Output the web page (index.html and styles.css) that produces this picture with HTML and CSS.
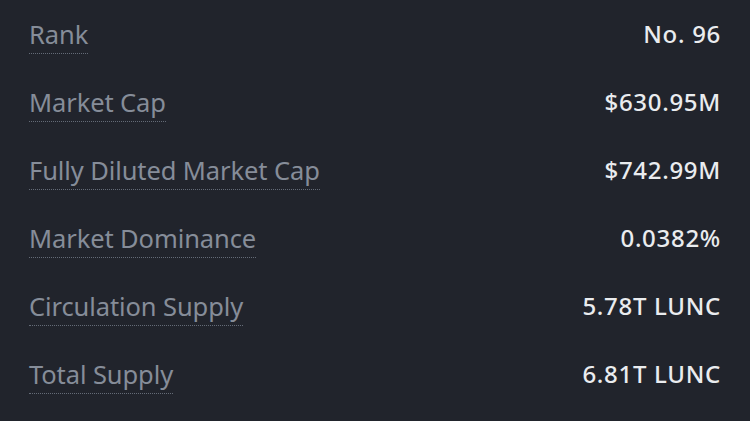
FILE: index.html
```html
<!DOCTYPE html>
<html>
<head>
<meta charset="utf-8">
<link rel="stylesheet" href="styles.css">
</head>
<body>
<div class="stats">
  <div class="row"><span class="label">Rank</span><span class="value">No. 96</span></div>
  <div class="row"><span class="label">Market Cap</span><span class="value">$630.95M</span></div>
  <div class="row"><span class="label">Fully Diluted Market Cap</span><span class="value">$742.99M</span></div>
  <div class="row"><span class="label">Market Dominance</span><span class="value">0.0382%</span></div>
  <div class="row"><span class="label">Circulation Supply</span><span class="value">5.78T LUNC</span></div>
  <div class="row"><span class="label">Total Supply</span><span class="value">6.81T LUNC</span></div>
</div>
</body>
</html>
```
FILE: styles.css
```css
html, body {
  margin: 0;
  padding: 0;
  background: #21242c;
  width: 750px;
  height: 421px;
  overflow: hidden;
}
.stats {
  display: flex;
  flex-direction: column;
  padding: 0 30px 0 29px;
}
.row {
  height: 68px;
  display: flex;
  justify-content: space-between;
  align-items: center;
}
.label {
  font-family: "Noto Sans", sans-serif;
  font-size: 25.5px;
  line-height: 30px;
  color: #868d99;
  border-bottom: 1px dotted #646b77;
  padding: 4px 0;
  letter-spacing: -0.1px;
}
.value {
  font-family: "Noto Sans", sans-serif;
  font-size: 24px;
  font-weight: 500;
  letter-spacing: 0.7px;
  color: #eaecef;
  line-height: 30px;
  margin-right: -1px;
}
```
